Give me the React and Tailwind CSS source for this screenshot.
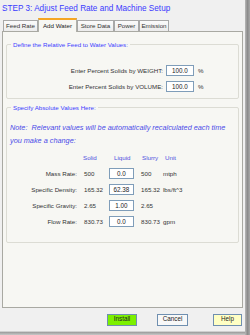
import React from 'react';

const font = { fontFamily: '"Liberation Sans", Arial, sans-serif' };

const Field = ({ value, className = '' }) => (
  <div className={`h-[11px] border border-[#7f9db9] bg-white flex items-center justify-center text-[6.3px] text-[#222] ${className}`}>
    {value}
  </div>
);

const tabs = [
  { name: 'Feed Rate', w: 'w-[35px]' },
  { name: 'Add Water', w: 'w-[39px]' },
  { name: 'Store Data', w: 'w-[37px]' },
  { name: 'Power', w: 'w-[25px]' },
  { name: 'Emission', w: 'w-[30px]' },
];

const rows = [
  { label: 'Mass Rate:', solid: '500', liquid: '0.0', slurry: '500', unit: 'mtph' },
  { label: 'Specific Density:', solid: '165.32', liquid: '62.38', slurry: '165.32', unit: 'lbs/ft^3' },
  { label: 'Specific Gravity:', solid: '2.65', liquid: '1.00', slurry: '2.65', unit: '' },
  { label: 'Flow Rate:', solid: '830.73', liquid: '0.0', slurry: '830.73', unit: 'gpm' },
];

export default function App() {
  return (
    <div className="w-[250px] h-[335px] bg-[#f0f0f0] flex overflow-hidden" style={font}>
      <div className="flex-1 flex flex-col">
        <div className="h-[18px] pl-[2px] pt-[3px] text-[8.2px] leading-[12px] text-[#3a3aff] whitespace-nowrap">
          STEP 3: Adjust Feed Rate and Machine Setup
        </div>

        {/* tabs */}
        <div className="flex items-end h-[13px] pl-[3px]">
          {tabs.map(({ name, w }) => {
            const active = name === 'Add Water';
            return (
              <div
                key={name}
                className={
                  active
                    ? `${w} h-[14px] border border-b-0 border-[#b0b0a8] border-t-2 border-t-[#f5a623] bg-[#f7f7f3] text-[6.2px] text-[#222] flex items-center justify-center -mb-px z-10`
                    : `${w} h-[11px] border border-b-0 border-[#a8a8a8] bg-gradient-to-b from-[#fbfbfb] to-[#ececec] text-[6.2px] text-[#333] flex items-center justify-center`
                }
              >
                {name}
              </div>
            );
          })}
        </div>

        {/* panel */}
        <div className="ml-[2px] w-[241px] h-[277px] border border-[#a9a9a2] bg-[#f7f7f3] px-[3px] pt-[12px]">
          <div className="relative h-[55px] border border-[#dcdcd4] rounded-[2px]">
            <span className="absolute -top-[5px] left-[4px] px-[2px] bg-[#f7f7f3] text-[6.2px] leading-[9px] text-[#4040ff]">
              Define the Relative Feed to Water Values:
            </span>
            <div className="flex flex-col gap-[5px] pt-[20px]">
              {['WEIGHT', 'VOLUME'].map((k) => (
                <div key={k} className="flex items-center">
                  <span className="w-[156px] text-right text-[6.2px] text-[#333]">Enter Percent Solids by {k}:</span>
                  <Field value="100.0" className="ml-[3px] w-[28px]" />
                  <span className="ml-[4px] text-[6.2px] text-[#333]">%</span>
                </div>
              ))}
            </div>
          </div>

          <div className="relative mt-[8px] h-[136px] border border-[#dcdcd4] rounded-[2px]">
            <span className="absolute -top-[5px] left-[4px] px-[2px] bg-[#f7f7f3] text-[6.2px] leading-[9px] text-[#4040ff]">
              Specify Absolute Values Here:
            </span>
            <div className="pt-[13px] pl-[3px] text-[7.3px] leading-[13px] italic text-[#4a4ae8] whitespace-nowrap">
              Note:&nbsp; Relevant values will be automatically recalculated each time
              <br />
              you make a change:
            </div>
            <div className="mt-[5px] grid grid-cols-[74px_30px_28px_26px_40px] text-[6.2px] text-[#5050e0] h-[12px] items-center">
              <span />
              <span className="pl-[2px]">Solid</span>
              <span className="pl-[3px]">Liquid</span>
              <span className="pl-[3px]">Slurry</span>
              <span>Unit</span>
            </div>
            <div className="flex flex-col gap-[5px] mt-[4px]">
              {rows.map((r) => (
                <div key={r.label} className="grid grid-cols-[74px_28px_27px_25px_40px] items-center text-[6.2px] text-[#333]">
                  <span className="text-right pr-[4px]">{r.label}</span>
                  <span className="pl-[3px]">{r.solid}</span>
                  <Field value={r.liquid} className="w-[25px]" />
                  <span className="pl-[5px]">{r.slurry}</span>
                  <span className="pl-[2px]">{r.unit}</span>
                </div>
              ))}
            </div>
          </div>
        </div>

        {/* buttons */}
        <div className="flex items-center h-[23px] pl-[107px] gap-[20px]">
          <button className="w-[30px] h-[12px] border border-[#6f8fb0] bg-[#7cf000] text-[6.3px] text-[#222] leading-none">Install</button>
          <button className="w-[31px] h-[12px] border border-[#6f8fb0] bg-[#f8f8f8] text-[6.3px] text-[#222] leading-none">Cancel</button>
          <button className="ml-[5px] w-[29px] h-[12px] border border-[#6f8fb0] bg-[#ffffc4] text-[6.3px] text-[#222] leading-none">Help</button>
        </div>
        <div className="flex-1 border-t border-[#d0d0d0] bg-gradient-to-b from-[#9a9a9a] to-[#c8c8c8]" />
      </div>
      <div className="w-[5px] bg-gradient-to-r from-[#b8b8b8] via-[#8c8c8c] to-[#a8a8a8]" />
    </div>
  );
}
